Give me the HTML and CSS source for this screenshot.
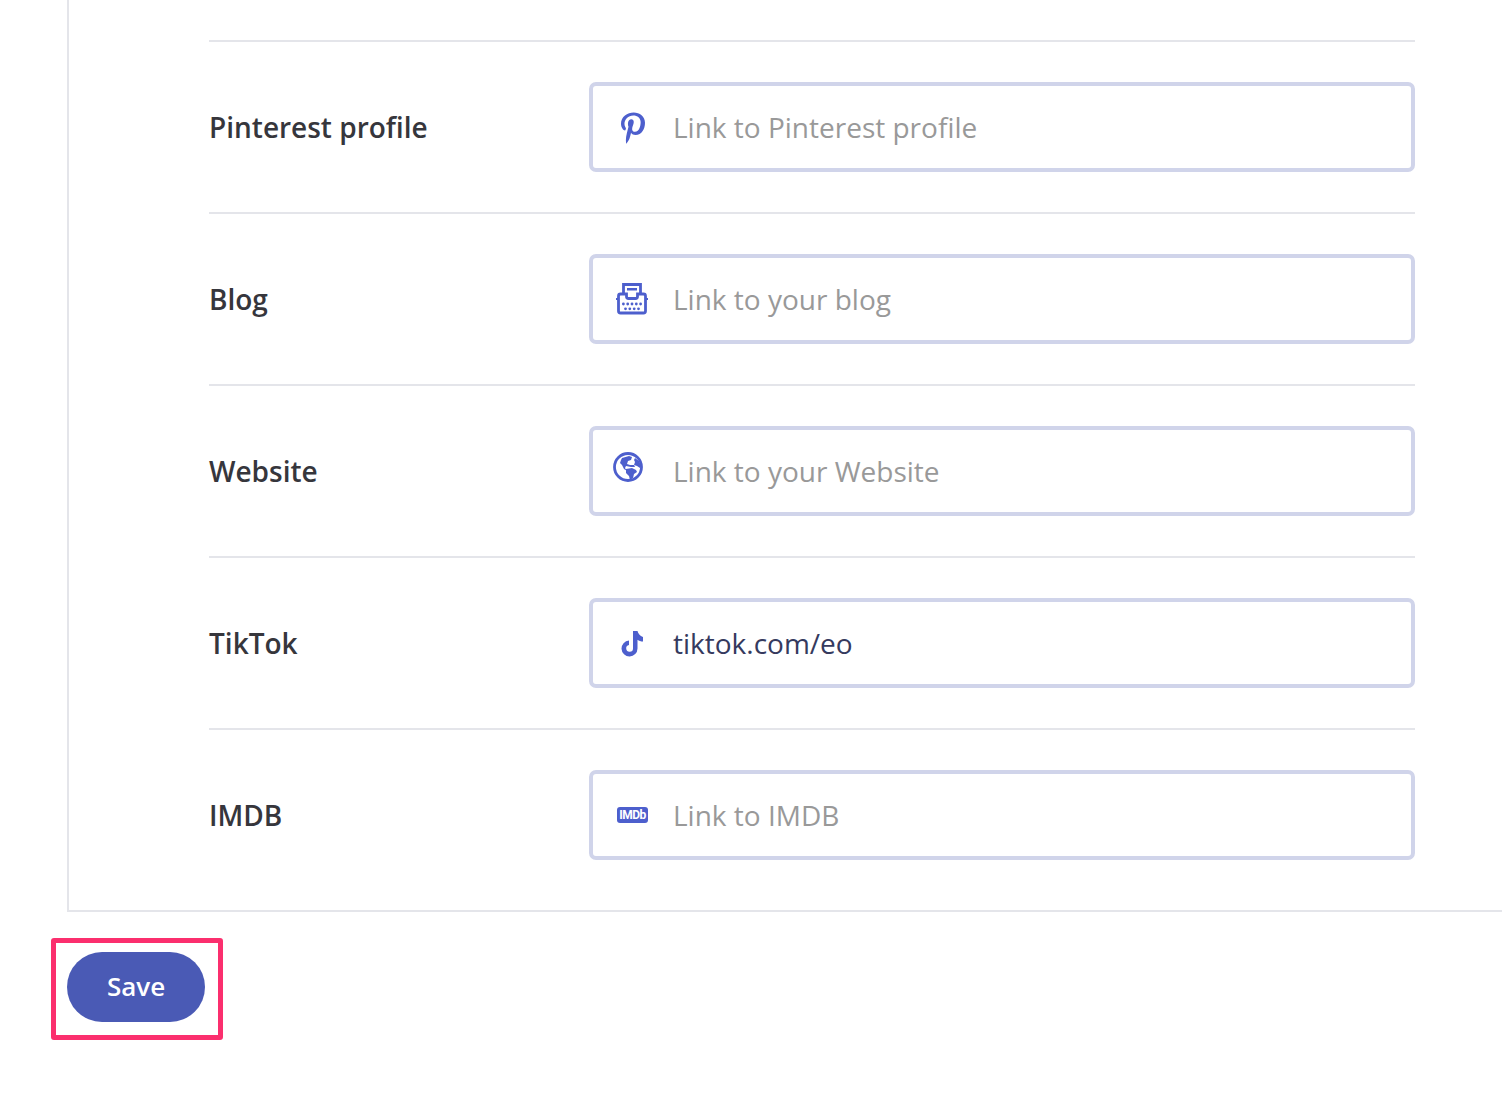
FILE: index.html
```html
<!DOCTYPE html>
<html lang="en">
<head>
<meta charset="utf-8">
<title>Social profiles</title>
<link rel="stylesheet" href="styles.css">
</head>
<body>
<form class="page">
  <section class="panel">
    <div class="row">
      <label class="label" for="pinterest">Pinterest profile</label>
      <div class="field">
        <svg class="icon" viewBox="0 0 48 48"><g transform="translate(12 9) scale(.0625)"><path d="M204 6.5C101.4 6.5 0 74.9 0 185.6 0 256 39.6 296 63.6 296c9.9 0 15.6-27.6 15.6-35.4 0-9.3-23.7-29.1-23.7-67.8 0-80.4 61.2-137.4 140.4-137.4 68.1 0 118.5 38.7 118.5 109.8 0 53.1-21.3 152.7-90.3 152.7-24.9 0-46.2-18-46.2-43.8 0-37.8 26.4-74.4 26.4-113.4 0-66.2-93.9-54.2-93.9 25.8 0 16.8 2.1 35.4 9.6 50.7-13.8 59.4-42 147.9-42 209.1 0 18.9 2.7 37.5 4.5 56.4 3.4 3.8 1.7 3.4 6.9 1.5 50.4-69 48.6-82.5 71.4-172.8 12.3 23.4 44.1 36 69.3 36 106.2 0 153.9-103.5 153.9-196.800C384 71.3 298.2 6.5 204 6.5z"/></g></svg>
        <input class="input" id="pinterest" placeholder="Link to Pinterest profile">
      </div>
    </div>
    <div class="row">
      <label class="label" for="blog">Blog</label>
      <div class="field">
        <svg class="icon" viewBox="0 0 48 48">
          <path class="line" d="M14.500 18V9.500h17V18"/>
          <path class="line" d="M17.500 19h-6a2 2 0 0 0-2 2v15a2 2 0 0 0 2 2h23a2 2 0 0 0 2-2V21a2 2 0 0 0-2-2H28.500v2.500a2 2 0 0 1-2 2h-7a2 2 0 0 1-2-2z"/>
          <rect x="18" y="13" width="10" height="2.500"/>
          <path class="line thin" d="M7 24h3M36 24h3"/>
          <g><circle cx="14.400" cy="29" r="1.400"/><circle cx="18.700" cy="29" r="1.400"/><circle cx="23" cy="29" r="1.400"/><circle cx="27.300" cy="29" r="1.400"/><circle cx="31.600" cy="29" r="1.400"/><circle cx="16.500" cy="33.800" r="1.400"/><circle cx="20.800" cy="33.800" r="1.400"/><circle cx="25.200" cy="33.800" r="1.400"/><circle cx="29.500" cy="33.800" r="1.400"/></g>
        </svg>
        <input class="input" id="blog" placeholder="Link to your blog">
      </div>
    </div>
    <div class="row">
      <label class="label" for="website">Website</label>
      <div class="field">
        <svg class="icon" viewBox="0 0 48 48">
          <circle class="line" cx="19" cy="20" r="13.500"/>
          <path d="M13 11l7-2 3 1-1 3-3 1-1 3 3 1 4 0 1 2-4 0-5-1-1 2 2 3-3-2-2-4-2-2 1-3z"/>
          <path d="M17 22l6-1 4 2 1 2-3 2-1 4-3 2-1-4-3-3z"/>
          <path d="M26 11l4 3 2 5-1 2-3-2-3-1 1-3-1-2z"/>
        </svg>
        <input class="input" id="website" placeholder="Link to your Website">
      </div>
    </div>
    <div class="row">
      <label class="label" for="tiktok">TikTok</label>
      <div class="field">
        <svg class="icon" viewBox="0 0 48 48">
          <path d="M24 12h4.500c.5 2.500 2.500 5 5.500 6v4.500c-2 0-4.200-.8-5.500-1.800V29.500a8 8 0 1 1-8.500-8v4.600a3.400 3.400 0 1 0 4 3.400z"/>
        </svg>
        <input class="input input-filled" id="tiktok" value="tiktok.com/eo">
      </div>
    </div>
    <div class="row">
      <label class="label" for="imdb">IMDB</label>
      <div class="field">
        <span class="slot"><span class="imdb">IMDb</span></span>
        <input class="input" id="imdb" placeholder="Link to IMDB">
      </div>
    </div>
  </section>
  <div class="actions">
    <button class="save" type="button">Save</button>
    <span class="highlight"></span>
  </div>
</form>
</body>
</html>
```

FILE: styles.css
```css
* { box-sizing: border-box; }
html, body { margin: 0; background: #fff; }
body {
  height: 1096px;
  overflow: hidden;
  font-family: "Open Sans", "Noto Sans", sans-serif;
}
.page { padding-left: 67px; }
.panel {
  border-left: 2px solid #e4e5ea;
  border-bottom: 2px solid #e4e5ea;
  padding: 40px 87px 10px 140px;
}
.row {
  display: grid;
  grid-template-columns: 380px 826px;
  align-items: center;
  height: 172px;
  padding: 40px 0;
  border-top: 2px solid #e4e5ea;
}
.label {
  font-size: 28px;
  font-weight: 600;
  color: #36363c;
}
.field {
  display: flex;
  align-items: center;
  height: 90px;
  border: 4px solid #d0d4ea;
  border-radius: 7px;
  background: #fff;
}
.icon, .slot {
  flex: none;
  width: 48px;
  height: 48px;
  margin: 0 16px;
  fill: #4d5fcd;
}
.line { fill: none; stroke: #4d5fcd; stroke-width: 2.800; }
.thin { stroke-width: 2; }
.slot { display: flex; align-items: center; justify-content: center; }
.imdb {
  display: block;
  flex: none;
  width: 31px;
  height: 16px;
  margin-left: -1px;
  border-radius: 3px;
  background: #4d5fcd;
  color: #fff;
  font: 700 12px/16px Roboto, "Liberation Sans", sans-serif;
  letter-spacing: -.5px;
  text-align: center;
}
.input {
  flex: 1;
  min-width: 0;
  border: 0;
  outline: 0;
  padding: 0;
  background: none;
  font: 400 28px "Open Sans", "Noto Sans", sans-serif;
  color: #353a5e;
}
.input::placeholder { color: #999; opacity: 1; }
.actions { position: relative; padding-top: 40px; }
.save {
  display: block;
  width: 138px;
  height: 70px;
  padding: 0 0 2px;
  border: 0;
  border-radius: 35px;
  background: #4a5ab5;
  color: #fff;
  font: 600 26px "Open Sans", "Noto Sans", sans-serif;
}
.highlight {
  position: absolute;
  left: -16px;
  top: 26px;
  width: 172px;
  height: 102px;
  border: 5px solid #fb2f6e;
  border-radius: 3px;
}
```
